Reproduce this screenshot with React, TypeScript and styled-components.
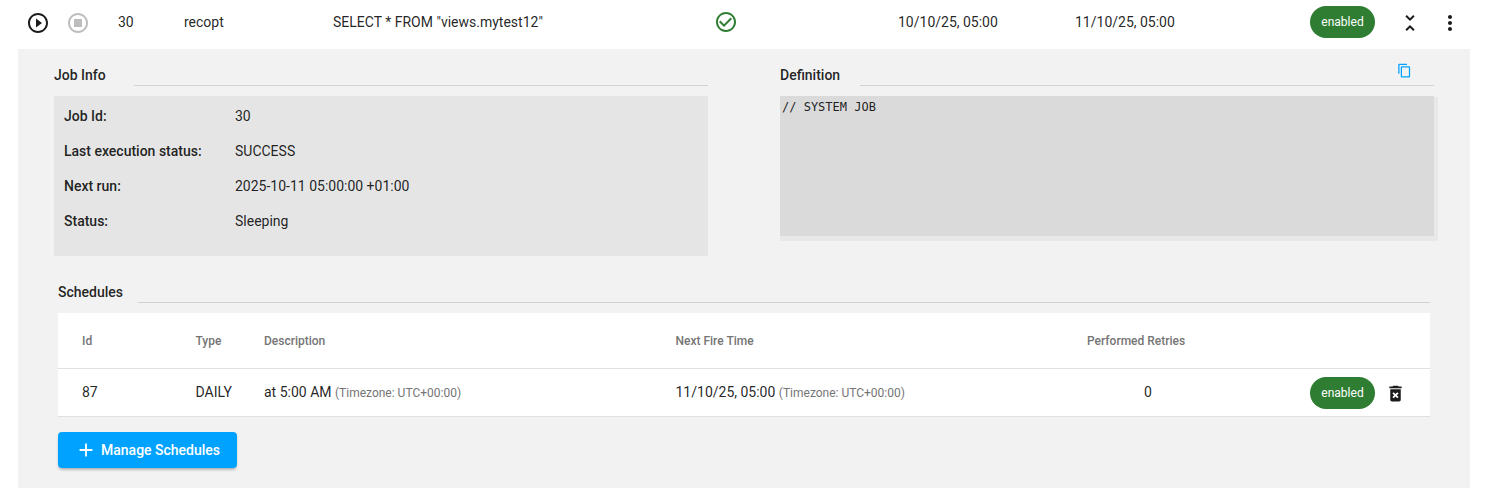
import styled, { createGlobalStyle } from "styled-components"
import {
  MdAdd,
  MdCheckCircleOutline,
  MdContentCopy,
  MdDeleteForever,
  MdMoreVert,
  MdOutlineStopCircle,
  MdPlayCircleOutline,
  MdUnfoldLess,
} from "react-icons/md"

const GlobalStyle = createGlobalStyle`
  html, body {
    margin: 0;
    padding: 0;
    background: #fff;
    font-family: Roboto, "Liberation Sans", sans-serif;
    font-size: 14px;
    color: rgba(0, 0, 0, 0.87);
  }
`

const infoRows = [
  ["Job Id:", "30"],
  ["Last execution status:", "SUCCESS"],
  ["Next run:", "2025-10-11 05:00:00 +01:00"],
  ["Status:", "Sleeping"],
]

export default function App() {
  return (
    <>
      <GlobalStyle />
      <Page>
        <JobRow>
          <IconCell><MdPlayCircleOutline size={24} color="#1b1b1b" /></IconCell>
          <IconCell><MdOutlineStopCircle size={24} color="#bdbdbd" /></IconCell>
          <div>30</div>
          <div>recopt</div>
          <div>SELECT * FROM "views.mytest12"</div>
          <StatusCell><MdCheckCircleOutline size={24} color="#2e7d32" /></StatusCell>
          <div>10/10/25, 05:00</div>
          <div>11/10/25, 05:00</div>
          <Badge>enabled</Badge>
          <IconCell><MdUnfoldLess size={24} color="#1b1b1b" /></IconCell>
          <IconCell><MdMoreVert size={24} color="#1b1b1b" /></IconCell>
        </JobRow>

        <Panel>
          <TopSections>
            <InfoColumn>
              <SectionHead>
                <SectionTitle>Job Info</SectionTitle>
                <SectionLine />
              </SectionHead>
              <InfoBox>
                {infoRows.map(([label, value]) => (
                  <InfoRow key={label}>
                    <InfoLabel>{label}</InfoLabel>
                    <div>{value}</div>
                  </InfoRow>
                ))}
              </InfoBox>
            </InfoColumn>

            <DefinitionColumn>
              <DefinitionHead>
                <SectionTitle>Definition</SectionTitle>
                <SectionLine />
                <CopyIcon><MdContentCopy size={15} color="#00a2ff" /></CopyIcon>
              </DefinitionHead>
              <CodeFrame>
                <CodeBox>// SYSTEM JOB</CodeBox>
              </CodeFrame>
            </DefinitionColumn>
          </TopSections>

          <SchedulesSection>
            <SectionHead>
              <SectionTitle>Schedules</SectionTitle>
              <SectionLine />
            </SectionHead>
            <ScheduleTable>
              <HeadRow>
                <div>Id</div>
                <div>Type</div>
                <div>Description</div>
                <div>Next Fire Time</div>
                <div>Performed Retries</div>
                <div />
              </HeadRow>
              <BodyRow>
                <div>87</div>
                <div>DAILY</div>
                <div>at 5:00 AM <Muted>(Timezone: UTC+00:00)</Muted></div>
                <div>11/10/25, 05:00 <Muted>(Timezone: UTC+00:00)</Muted></div>
                <RetriesCell>0</RetriesCell>
                <ActionsCell>
                  <Badge>enabled</Badge>
                  <MdDeleteForever size={21} color="#1b1b1b" />
                </ActionsCell>
              </BodyRow>
            </ScheduleTable>
            <ManageButton type="button">
              <MdAdd size={22} />
              Manage Schedules
            </ManageButton>
          </SchedulesSection>
        </Panel>
      </Page>
    </>
  )
}

const Page = styled.div`
  width: 1489px;
  height: 488px;
  overflow: hidden;
`

const JobRow = styled.div`
  display: grid;
  grid-template-columns: 40px 52px 66px 149px 381px 184px 177px 235px 88px 40px 24px;
  align-items: center;
  height: 49px;
  padding-left: 26px;
  padding-bottom: 5px;
  box-sizing: border-box;
  white-space: nowrap;
`

const IconCell = styled.div`
  display: flex;
  align-items: center;
  margin-top: 2px;
  svg {
    display: block;
  }
`

const StatusCell = styled.div`
  display: flex;
  align-items: center;
  svg {
    display: block;
  }
`

const Badge = styled.div`
  display: flex;
  align-items: center;
  justify-content: center;
  width: 65px;
  height: 32px;
  border-radius: 16px;
  background: #2e7d32;
  color: #fff;
  font-size: 12px;
`

const Panel = styled.div`
  margin: 0 19px 0 18px;
  height: 439px;
  background: #f2f2f2;
  padding: 16px 40px 0 36px;
  box-sizing: border-box;
`

const TopSections = styled.div`
  display: flex;
  gap: 72px;
`

const InfoColumn = styled.div`
  width: 654px;
`

const DefinitionColumn = styled.div`
  width: 658px;
  margin-right: -8px;
`

const SectionHead = styled.div`
  position: relative;
  display: flex;
  align-items: flex-end;
  height: 21px;
`

const DefinitionHead = styled(SectionHead)`
  margin-right: 4px;
`

const SectionTitle = styled.div`
  width: 80px;
  margin-bottom: 1px;
  font-weight: 500;
  line-height: 20px;
`

const SectionLine = styled.div`
  flex: 1;
  height: 1px;
  background: #d2d2d2;
`

const CopyIcon = styled.div`
  position: absolute;
  right: 22px;
  top: -2px;
  svg {
    display: block;
  }
`

const InfoBox = styled.div`
  margin-top: 10px;
  height: 160px;
  padding: 2px 10px 0;
  box-sizing: border-box;
  background: #e5e5e5;
`

const InfoRow = styled.div`
  display: flex;
  align-items: center;
  height: 35px;
`

const InfoLabel = styled.div`
  width: 171px;
  font-weight: 500;
`

const CodeFrame = styled.div`
  margin-top: 11px;
  height: 144px;
  padding-right: 4px;
  background: #e8e8e8;
`

const CodeBox = styled.div`
  position: relative;
  top: -1px;
  height: 140px;
  padding: 4px 2px;
  box-sizing: border-box;
  background: #dadada;
  font-family: "DejaVu Sans Mono", monospace;
  font-size: 12px;
  line-height: 14px;
`

const SchedulesSection = styled.div`
  margin-top: 26px;
  padding-left: 4px;
`

const ScheduleTable = styled.div`
  margin-top: 10px;
  background: #fff;
`

const tableColumns = "113.5px 68.5px 411.5px 411.5px 144px 1fr"

const HeadRow = styled.div`
  display: grid;
  grid-template-columns: ${tableColumns};
  align-items: center;
  height: 55px;
  padding-left: 24px;
  border-bottom: 1px solid #e0e0e0;
  color: #757575;
  font-size: 12px;
  font-weight: 500;
`

const BodyRow = styled.div`
  display: grid;
  grid-template-columns: ${tableColumns};
  align-items: center;
  height: 46px;
  padding: 0 0 1px 24px;
  border-bottom: 1px solid #e0e0e0;
`

const Muted = styled.span`
  color: #757575;
  font-size: 12px;
`

const RetriesCell = styled.div`
  padding-left: 57px;
`

const ActionsCell = styled.div`
  display: flex;
  align-items: center;
  justify-content: flex-end;
  gap: 10px;
  margin-top: 2px;
  padding-right: 24px;
  svg {
    display: block;
  }
`

const ManageButton = styled.button`
  display: flex;
  align-items: center;
  gap: 4px;
  height: 36px;
  width: 179px;
  margin-top: 15px;
  padding: 0 0 0 17px;
  border: none;
  border-radius: 4px;
  background: #00a2ff;
  color: #fff;
  font-family: Roboto, "Liberation Sans", sans-serif;
  font-size: 14px;
  font-weight: 500;
  box-shadow: 0 3px 3px -2px rgba(0, 0, 0, 0.2), 0 2px 3px 0 rgba(0, 0, 0, 0.14);
`
